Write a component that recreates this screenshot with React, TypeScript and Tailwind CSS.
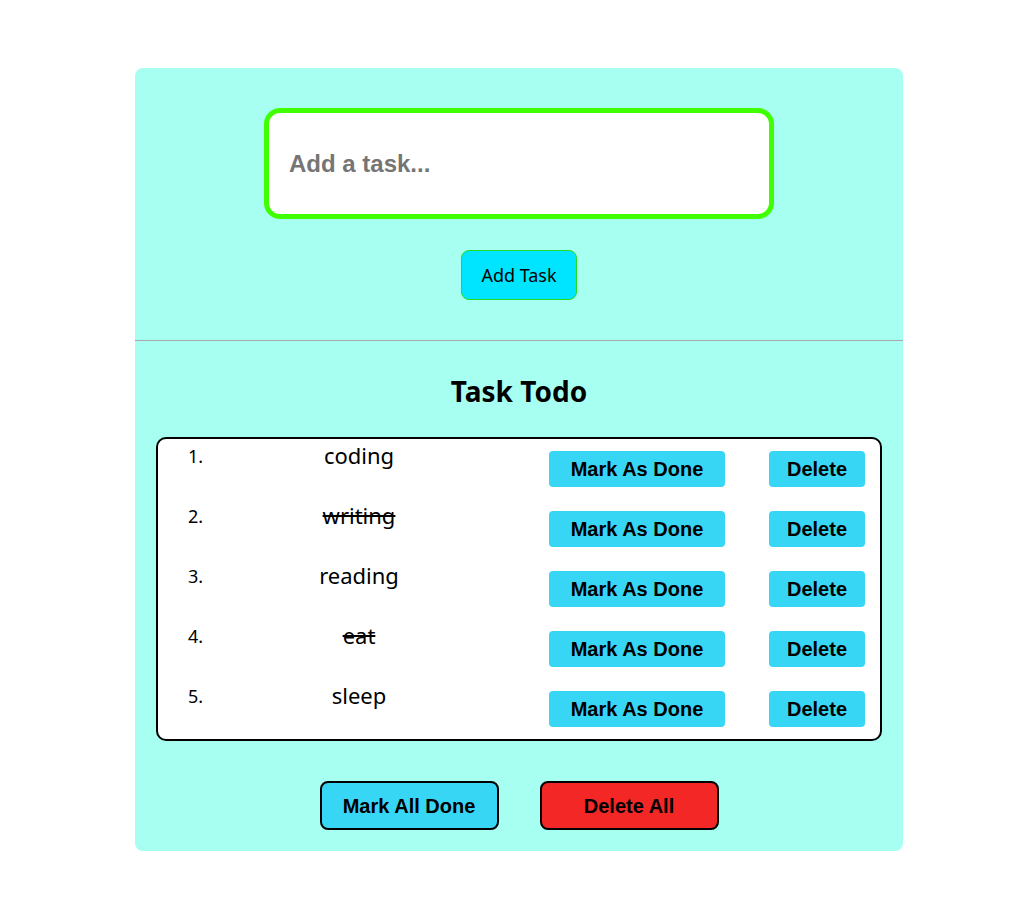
import React from "react";

const tasks = [
  { text: "coding", done: false },
  { text: "writing", done: true },
  { text: "reading", done: false },
  { text: "eat", done: true },
  { text: "sleep", done: false },
];

export default function App() {
  return (
    <div className="w-[1032px] h-[910px] bg-white pt-[68px]">
      <div className="ml-[135px] w-[768px] h-[783px] rounded-[8px] bg-[#a7fff2] flex flex-col">
        <div className="flex flex-col items-center pt-[40px] h-[272px]">
          <div className="w-[510px] h-[111px] rounded-[16px] border-[5px] border-[#40ff00] bg-white flex items-center px-[20px]">
            <span
              className="text-[24px] font-bold text-[#757575]"
              style={{ fontFamily: '"Liberation Sans", Arial, sans-serif' }}
            >
              Add a task...
            </span>
          </div>
          <button
            className="mt-[31px] w-[116px] h-[50px] rounded-[8px] border border-[#22dd22] bg-[#00e5ff] text-[18px] text-black"
            style={{ fontFamily: '"Noto Sans", "Open Sans", sans-serif' }}
          >
            Add Task
          </button>
        </div>
        <div className="h-px bg-[#a8a8a8]" />
        <div className="flex flex-col items-center">
          <h2
            className="mt-[30px] text-[28px] font-bold text-black leading-[40px]"
            style={{ fontFamily: '"Noto Sans", "Open Sans", sans-serif' }}
          >
            Task Todo
          </h2>
          <div className="mt-[26px] w-[726px] h-[304px] rounded-[10px] border-2 border-black bg-white">
            {tasks.map((t, i) => (
              <div key={i} className="flex items-start h-[60px]">
                <span
                  className="ml-[30px] w-[42px] text-[18px] leading-[34px] text-black"
                  style={{ fontFamily: '"Noto Sans", "Open Sans", sans-serif' }}
                >
                  {i + 1}.
                </span>
                <span
                  className={`w-[258px] text-center text-[22px] leading-[32px] text-black ${t.done ? "line-through" : ""}`}
                  style={{ fontFamily: '"Noto Sans", "Open Sans", sans-serif' }}
                >
                  {t.text}
                </span>
                <button
                  className="ml-[61px] mt-[12px] w-[176px] h-[36px] rounded-[4px] bg-[#38d6f5] text-[20px] font-bold text-black leading-[34px]"
                  style={{ fontFamily: '"Liberation Sans", Arial, sans-serif' }}
                >
                  Mark As Done
                </button>
                <button
                  className="ml-[44px] mt-[12px] w-[96px] h-[36px] rounded-[4px] bg-[#38d6f5] text-[20px] font-bold text-black leading-[34px]"
                  style={{ fontFamily: '"Liberation Sans", Arial, sans-serif' }}
                >
                  Delete
                </button>
              </div>
            ))}
          </div>
          <div className="mt-[40px] flex gap-[41px]">
            <button
              className="w-[179px] h-[49px] rounded-[8px] border-2 border-black bg-[#38d6f5] text-[20px] font-bold text-black"
              style={{ fontFamily: '"Liberation Sans", Arial, sans-serif' }}
            >
              Mark All Done
            </button>
            <button
              className="w-[179px] h-[49px] rounded-[8px] border-2 border-black bg-[#f42727] text-[20px] font-bold text-black"
              style={{ fontFamily: '"Liberation Sans", Arial, sans-serif' }}
            >
              Delete All
            </button>
          </div>
        </div>
      </div>
    </div>
  );
}
